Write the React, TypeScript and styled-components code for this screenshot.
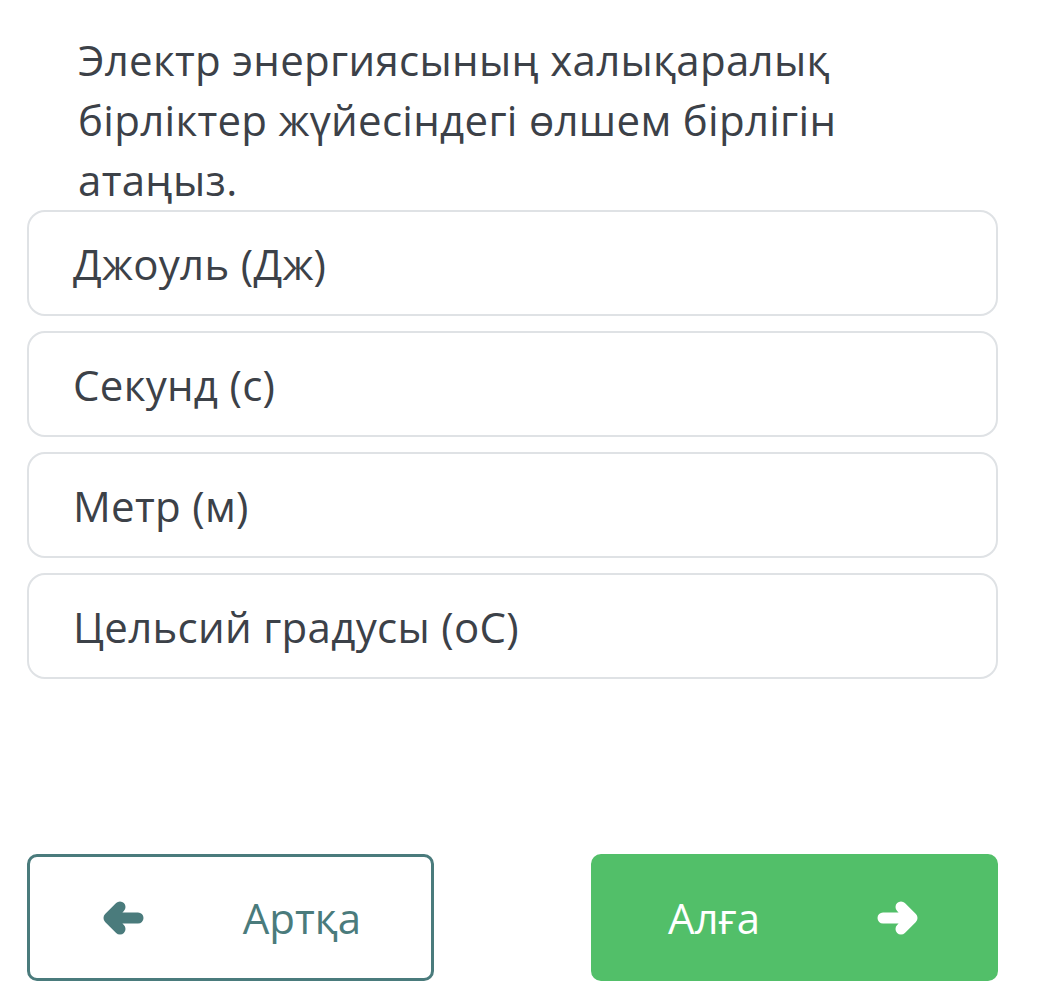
import React from 'react'
import styled, { createGlobalStyle } from 'styled-components'

const GlobalStyle = createGlobalStyle`
  html, body {
    margin: 0;
    padding: 0;
    background: #ffffff;
  }
  body {
    font-family: 'Open Sans', 'Noto Sans', sans-serif;
    color: #3c4148;
  }
`

const Page = styled.div`
  width: 1052px;
  padding: 30px 54px 0 27px;
  box-sizing: border-box;
`

const Question = styled.div`
  padding: 0 40px 0 51px;
  font-size: 42px;
  line-height: 60px;
  letter-spacing: 0.3px;
  color: #3c4148;
`

const Options = styled.div`
  display: flex;
  flex-direction: column;
  gap: 15px;
`

const Option = styled.div`
  height: 106px;
  box-sizing: border-box;
  border: 2px solid #dfe2e5;
  border-radius: 18px;
  padding-left: 44px;
  display: flex;
  align-items: center;
  font-size: 42px;
  letter-spacing: 0.3px;
  color: #3c4148;
`

const Footer = styled.div`
  display: flex;
  justify-content: space-between;
  margin-top: 175px;
`

const NavButton = styled.button<{ primary?: boolean }>`
  width: 407px;
  height: 127px;
  box-sizing: border-box;
  border-radius: 10px;
  border: 3px solid ${({ primary }) => (primary ? '#52bf69' : '#4a7b7c')};
  background: ${({ primary }) => (primary ? '#52bf69' : '#ffffff')};
  color: ${({ primary }) => (primary ? '#ffffff' : '#4a7b7c')};
  font-family: 'Open Sans', 'Noto Sans', sans-serif;
  font-size: 42px;
  display: flex;
  align-items: center;
  justify-content: space-between;
  padding: ${({ primary }) => (primary ? '0 76px 0 74px' : '0 70px 0 72px')};
  cursor: pointer;
`

const ArrowSvg = styled.svg`
  width: 42px;
  height: 38px;
  display: block;
`

function Arrow({ dir }: { dir: 'left' | 'right' }) {
  return (
    <ArrowSvg viewBox="0 0 42 38" style={dir === 'right' ? { transform: 'scaleX(-1)' } : undefined}>
      <path
        d="M36 19 H7 M18 8 L7 19 L18 30"
        fill="none"
        stroke="currentColor"
        strokeWidth={11}
        strokeLinecap="round"
        strokeLinejoin="round"
      />
    </ArrowSvg>
  )
}

const options = ['Джоуль (Дж)', 'Секунд (с)', 'Метр (м)', 'Цельсий градусы (оС)']

export default function App() {
  return (
    <>
      <GlobalStyle />
      <Page>
        <Question>Электр энергиясының халықаралық бірліктер жүйесіндегі өлшем бірлігін атаңыз.</Question>
        <Options>
          {options.map((text) => (
            <Option key={text}>{text}</Option>
          ))}
        </Options>
        <Footer>
          <NavButton>
            <Arrow dir="left" />
            <span>Артқа</span>
          </NavButton>
          <NavButton primary>
            <span>Алға</span>
            <Arrow dir="right" />
          </NavButton>
        </Footer>
      </Page>
    </>
  )
}
